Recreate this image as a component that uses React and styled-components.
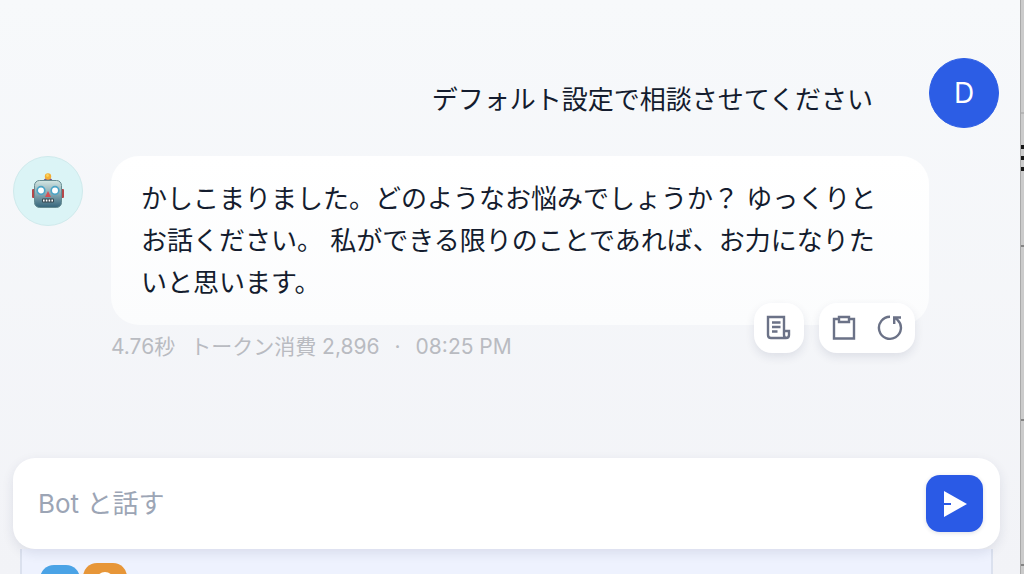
import React, { useState } from 'react';
import styled, { createGlobalStyle } from 'styled-components';

const GlobalStyle = createGlobalStyle`
  *, *::before, *::after {
    box-sizing: border-box;
  }
  body {
    margin: 0;
    overflow: hidden;
    font-family: Inter, "Noto Sans CJK JP", sans-serif;
    color: #141c2e;
  }
  button, input {
    font-family: inherit;
  }
`;

const Page = styled.div`
  display: flex;
  height: 100vh;
  background: linear-gradient(#f7f9fb, #f2f3f7);
`;

const Chat = styled.main`
  flex: 1;
  min-width: 0;
  display: flex;
  flex-direction: column;
  justify-content: space-between;
  padding: 58px 20px 0 13px;
`;

const Messages = styled.section`
  display: flex;
  flex-direction: column;
  gap: 28px;
  padding-right: 1px;
`;

const Row = styled.div`
  display: flex;
  align-items: flex-start;
  justify-content: ${(props) => (props.$mine ? 'flex-end' : 'flex-start')};
  gap: ${(props) => (props.$mine ? '56px' : '28px')};
`;

const Avatar = styled.div`
  display: flex;
  flex: none;
  align-items: center;
  justify-content: center;
  width: 70px;
  height: 70px;
  border-radius: 50%;
  font-size: 28px;
  color: white;
  background: ${(props) => (props.$bot ? '#dbf4f6' : '#2c5de5')};
  border: 1px solid ${(props) => (props.$bot ? '#cfeaec' : '#2c5de5')};
`;

const Text = styled.p`
  margin: 0;
  font-size: 26px;
  line-height: 42px;
`;

const MyText = styled(Text)`
  padding-top: 21px;
`;

const Answer = styled.div`
  flex: 1;
  margin-right: 70px;
`;

const Bubble = styled.div`
  padding: 22px 30px 21px;
  border-radius: 28px;
  background: linear-gradient(#ffffff, #fbfcfd);
`;

const Footer = styled.div`
  display: flex;
  align-items: flex-start;
  justify-content: space-between;
  padding-right: 14px;
`;

const Meta = styled.div`
  display: flex;
  gap: 15px;
  padding-top: 7px;
  font-size: 21px;
  line-height: 30px;
  color: #b9bbc1;
`;

const Actions = styled.div`
  display: flex;
  gap: 15px;
  margin-top: -22px;
`;

const ActionGroup = styled.div`
  display: flex;
  padding: 0 2px;
  border-radius: 18px;
  background: white;
  box-shadow: 0 4px 10px rgba(30, 40, 80, 0.1);
`;

const IconButton = styled.button`
  display: flex;
  align-items: center;
  justify-content: center;
  width: 46px;
  height: 50px;
  padding: 0;
  border: none;
  background: none;
  color: #6b7287;
  cursor: pointer;
`;

const Composer = styled.form`
  position: relative;
  display: flex;
  align-items: center;
  height: 91px;
  padding: 0 17px 0 25px;
  border-radius: 22px;
  background: white;
  box-shadow: 0 4px 12px rgba(30, 40, 80, 0.1);
`;

const Input = styled.input`
  flex: 1;
  min-width: 0;
  padding: 0;
  border: none;
  outline: none;
  background: none;
  font-size: 26px;
  color: #141c2e;
  &::placeholder {
    color: #9ca5b5;
    opacity: 1;
  }
`;

const SendButton = styled.button`
  display: flex;
  align-items: center;
  justify-content: center;
  width: 57px;
  height: 57px;
  padding: 0;
  border: none;
  border-radius: 14px;
  background: #2a5ae6;
  box-shadow: 0 1px 4px rgba(30, 40, 80, 0.15);
  cursor: pointer;
`;

const Tray = styled.div`
  display: flex;
  align-items: flex-start;
  gap: 3px;
  height: 25px;
  margin: 0 7px;
  padding-left: 18px;
  overflow: hidden;
  border: solid #dbe1ee;
  border-width: 0 2px;
  background: #eef2fe;
`;

const Chip = styled.div`
  display: flex;
  justify-content: center;
  width: ${(props) => (props.$large ? '44px' : '40px')};
  height: ${(props) => (props.$large ? '44px' : '40px')};
  margin-top: ${(props) => (props.$large ? '14px' : '16px')};
  border-radius: 14px;
  background: ${(props) => props.$color};
`;

const Edge = styled.aside`
  display: flex;
  flex: none;
  flex-direction: column;
  width: 4px;
  border-left: 1px solid #a9a9a9;
  background: #cbcbcb;
`;

const EdgeCell = styled.div`
  flex: ${(props) => props.$size} 0 0;
  border-bottom: 2px solid ${(props) => props.$line};
`;

const Marks = styled.div`
  display: flex;
  flex-direction: column;
  justify-content: flex-end;
  gap: 7px;
  flex: 58 0 0;
`;

const Mark = styled.span`
  height: 4px;
  background: #161616;
`;

function RobotIcon() {
  return (
    <svg width="34" height="36" viewBox="0 0 34 36" aria-hidden="true">
      <defs>
        <linearGradient id="face" x1="0" y1="0" x2="0" y2="1">
          <stop offset="0" stopColor="#d3e6e3" />
          <stop offset="0.5" stopColor="#87a9b2" />
          <stop offset="1" stopColor="#35647a" />
        </linearGradient>
      </defs>
      <rect x="1" y="16" width="4" height="9" rx="1" fill="#b4474a" />
      <rect x="29" y="16" width="4" height="9" rx="1" fill="#b4474a" />
      <path d="M12.500 8.500c0-5 9-5 9 0z" fill="#71538c" />
      <circle cx="17" cy="3.500" r="3.200" fill="#f3ae35" />
      <circle cx="16.500" cy="2.500" r="1.400" fill="#fbd45c" />
      <rect x="3.500" y="7.500" width="27" height="27" rx="5" fill="url(#face)" stroke="#668b91" />
      <circle cx="10" cy="17.500" r="3.800" fill="#fff" stroke="#4ba4c6" strokeWidth="1.700" />
      <circle cx="24" cy="17.500" r="3.800" fill="#fff" stroke="#4ba4c6" strokeWidth="1.700" />
      <path d="M17 18l3 6h-6z" fill="#d65054" />
      <rect x="11" y="25.500" width="12" height="4" rx="1" fill="#364750" />
      <path d="M12 27.500h10" stroke="#fff" strokeWidth="2" strokeDasharray="1.600 1.200" />
    </svg>
  );
}

function LogIcon() {
  return (
    <svg width="26" height="26" viewBox="0 0 26 26" fill="none" stroke="currentColor" strokeWidth="2.400" aria-hidden="true">
      <path d="M18 18V2H2v18q0 3 3 3h15q3 0 3-3v-4h-5v4q0 3 2.500 3M6 7.500h8.500M6 12h8.500M6 16.500h5.500" />
    </svg>
  );
}

function ClipboardIcon() {
  return (
    <svg width="26" height="26" viewBox="0 0 26 26" fill="none" stroke="currentColor" strokeWidth="2.400" aria-hidden="true">
      <path d="M8 4H3v19.500h20V4h-5M8 2h10v5H8z" />
    </svg>
  );
}

function RetryIcon() {
  return (
    <svg width="26" height="26" viewBox="0 0 26 26" fill="none" stroke="currentColor" strokeWidth="2.400" aria-hidden="true">
      <path d="M13 1.800A11 11 0 1 0 20.500 4.800L18 3" />
      <path d="M17.200 9V2.500H24" />
    </svg>
  );
}

export default function App() {
  const [message, setMessage] = useState('');

  const handleSubmit = (event) => {
    event.preventDefault();
    setMessage('');
  };

  return (
    <>
      <GlobalStyle />
      <Page>
        <Chat>
          <Messages>
            <Row $mine>
              <MyText>デフォルト設定で相談させてください</MyText>
              <Avatar>D</Avatar>
            </Row>
            <Row>
              <Avatar $bot>
                <RobotIcon />
              </Avatar>
              <Answer>
                <Bubble>
                  <Text>
                    かしこまりました。どのようなお悩みでしょうか？ ゆっくりとお話ください。 私ができる限りのことであれば、お力になりたいと思います。
                  </Text>
                </Bubble>
                <Footer>
                  <Meta>
                    <span>4.76秒</span>
                    <span>トークン消費 2,896</span>
                    <span>·</span>
                    <span>08:25 PM</span>
                  </Meta>
                  <Actions>
                    <ActionGroup>
                      <IconButton type="button" aria-label="ログ">
                        <LogIcon />
                      </IconButton>
                    </ActionGroup>
                    <ActionGroup>
                      <IconButton type="button" aria-label="コピー">
                        <ClipboardIcon />
                      </IconButton>
                      <IconButton type="button" aria-label="再生成">
                        <RetryIcon />
                      </IconButton>
                    </ActionGroup>
                  </Actions>
                </Footer>
              </Answer>
            </Row>
          </Messages>
          <div>
            <Composer onSubmit={handleSubmit}>
              <Input
                name="message"
                aria-label="メッセージ"
                placeholder="Bot と話す"
                value={message}
                onChange={(event) => setMessage(event.target.value)}
              />
              <SendButton aria-label="送信">
                <svg width="24" height="26" viewBox="0 0 24 26" aria-hidden="true">
                  <path d="M1 0l23 13L1 26V14h7v-2H1z" fill="#fff" />
                </svg>
              </SendButton>
            </Composer>
            <Tray>
              <Chip $color="#4aa3e6" />
              <Chip $large $color="#e79638">
                <svg width="20" height="20" viewBox="0 0 20 20" aria-hidden="true">
                  <circle cx="10" cy="18" r="8" fill="none" stroke="#fff" strokeWidth="2" />
                </svg>
              </Chip>
            </Tray>
          </div>
        </Chat>
        <Edge>
          <EdgeCell $size={114} $line="#b5b5b5" />
          <Marks>
            <Mark />
            <Mark />
            <Mark />
          </Marks>
          <EdgeCell $size={75} $line="#858585" />
          <EdgeCell $size={175} $line="#858585" />
          <EdgeCell $size={146} $line="#858585" />
          <EdgeCell $size={6} $line="#cbcbcb" />
        </Edge>
      </Page>
    </>
  );
}
